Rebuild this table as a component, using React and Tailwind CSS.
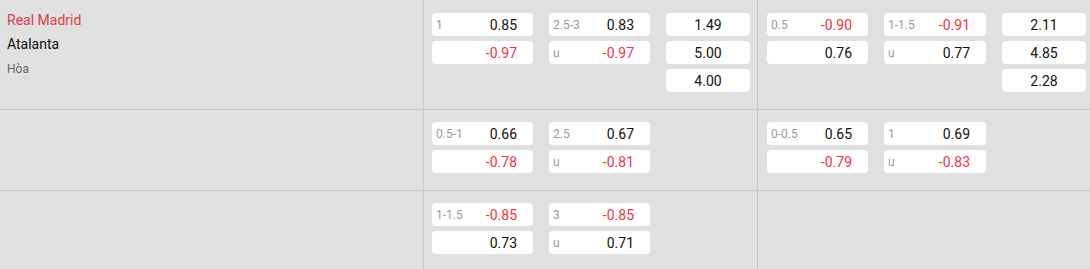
import React from "react";

const RED = "text-[#f7303f]";
const BLK = "text-[#111111]";

function Odd({ label, value, red, w = "w-[101px]" }) {
  return (
    <div className={`${w} h-[23px] bg-white rounded-[4px] flex items-center justify-between pl-[4px] pr-[16px]`}>
      <span className="text-[12px] text-[#9a9a9a] leading-none">{label}</span>
      <span className={`text-[14px] leading-none ${red ? RED : BLK}`}>{value}</span>
    </div>
  );
}

function Pair({ a, b, w }) {
  return (
    <div className="flex flex-col gap-[5px]">
      <Odd {...a} w={w} />
      <Odd {...b} w={w} />
    </div>
  );
}

function X12({ vals }) {
  return (
    <div className="flex flex-col gap-[5px]">
      {vals.map((v, i) => (
        <div key={i} className="w-[84px] h-[23px] bg-white rounded-[4px] flex items-center justify-center">
          <span className={`text-[14px] leading-none ${BLK}`}>{v}</span>
        </div>
      ))}
    </div>
  );
}

function Row({ h, pt, left, s1, s2, last }) {
  return (
    <div className={`flex ${h} ${last ? "" : "border-b border-[#c8c8c8]"}`}>
      <div className="w-[424px] shrink-0 border-r border-[#c8c8c8]">{left}</div>
      <div className={`w-[334px] shrink-0 border-r border-[#c8c8c8] pl-[8px] ${pt} flex items-start gap-[16px]`}>
        {s1}
      </div>
      <div className={`flex-1 pl-[9px] ${pt} flex items-start gap-[16px]`}>{s2}</div>
    </div>
  );
}

export default function App() {
  return (
    <div className="w-[1090px] h-[269px] overflow-hidden bg-[#e0e0e0] font-['Roboto',sans-serif]">
      <Row
        h="h-[110px]"
        pt="pt-[13px]"
        left={
          <div className="pl-[7px] pt-[8px]">
            <div className="text-[14px] leading-[24px] text-[#dc3d4a]">Real Madrid</div>
            <div className="text-[14px] leading-[24px] text-[#111111]">Atalanta</div>
            <div className="text-[12px] leading-[24px] mt-[1px] text-[#666666]">Hòa</div>
          </div>
        }
        s1={
          <>
            <Pair a={{ label: "1", value: "0.85" }} b={{ label: "", value: "-0.97", red: true }} />
            <Pair a={{ label: "2.5-3", value: "0.83" }} b={{ label: "u", value: "-0.97", red: true }} />
            <X12 vals={["1.49", "5.00", "4.00"]} />
          </>
        }
        s2={
          <>
            <Pair a={{ label: "0.5", value: "-0.90", red: true }} b={{ label: "", value: "0.76" }} />
            <Pair w="w-[102px]" a={{ label: "1-1.5", value: "-0.91", red: true }} b={{ label: "u", value: "0.77" }} />
            <X12 vals={["2.11", "4.85", "2.28"]} />
          </>
        }
      />
      <Row
        h="h-[81px]"
        pt="pt-[12px]"
        left={null}
        s1={
          <>
            <Pair a={{ label: "0.5-1", value: "0.66" }} b={{ label: "", value: "-0.78", red: true }} />
            <Pair a={{ label: "2.5", value: "0.67" }} b={{ label: "u", value: "-0.81", red: true }} />
          </>
        }
        s2={
          <>
            <Pair a={{ label: "0-0.5", value: "0.65" }} b={{ label: "", value: "-0.79", red: true }} />
            <Pair w="w-[102px]" a={{ label: "1", value: "0.69" }} b={{ label: "u", value: "-0.83", red: true }} />
          </>
        }
      />
      <Row
        h="h-[78px]"
        pt="pt-[12px]"
        last
        left={null}
        s1={
          <>
            <Pair a={{ label: "1-1.5", value: "-0.85", red: true }} b={{ label: "", value: "0.73" }} />
            <Pair a={{ label: "3", value: "-0.85", red: true }} b={{ label: "u", value: "0.71" }} />
          </>
        }
        s2={null}
      />
    </div>
  );
}
